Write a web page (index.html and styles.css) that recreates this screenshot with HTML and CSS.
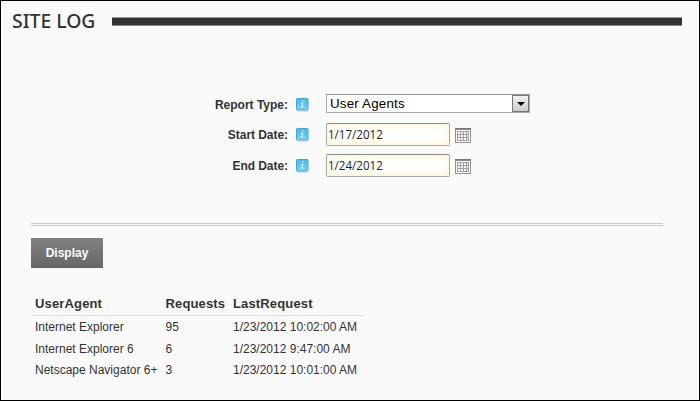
FILE: index.html
```
<!DOCTYPE html>
<html lang="en">
<head>
<meta charset="utf-8">
<title>Site Log</title>
<link rel="stylesheet" href="styles.css">
</head>
<body>
<svg class="defs" width="0" height="0" aria-hidden="true">
  <defs>
    <linearGradient id="blue" x1="0" y1="0" x2="0" y2="1"><stop offset="0" stop-color="#4fb8e6"/><stop offset=".55" stop-color="#62c5f0"/><stop offset="1" stop-color="#86d8f7"/></linearGradient>
    <symbol id="info" viewBox="0 0 13 14">
      <path d="M1 13h11" stroke="#ccc"/>
      <rect x=".5" y=".5" width="11.5" height="11.5" rx=".8" fill="url(#blue)" stroke="#3ba5d4"/>
      <path d="M6.3 2.8h1.6M5 5h1.9L5.9 8.9M4.6 9h2.4" stroke="#def4fd" stroke-width="1" fill="none"/>
    </symbol>
    <symbol id="calendar" viewBox="0 0 16 15">
      <rect x=".5" y=".5" width="15" height="14" fill="#fff" stroke="#929292"/>
      <path d="M0 .5h16" stroke="#777"/><path d="M0 1.5h16" stroke="#8c8c8c"/>
      <path d="M2 3h12v10H2z" fill="#a0a0a0"/>
      <path d="M3 4h2v2H3zM6 4h2v2H6zM9 4h2v2H9zM12 4h1v2h-1zM3 7h2v2H3zM6 7h2v2H6zM9 7h2v2H9zM12 7h1v2h-1zM3 10h2v2H3zM6 10h2v2H6zM9 10h2v2H9zM12 10h1v2h-1z" fill="#fff"/>
    </symbol>
  </defs>
</svg>
<main class="panel">
  <header class="heading"><h1>SITE LOG</h1><span class="bar"></span></header>
  <form class="form">
    <div class="row row-type"><label>Report Type:</label><svg class="info"><use href="#info"/></svg>
      <div class="select"><span>User Agents</span><i class="drop"></i></div></div>
    <div class="row"><label>Start Date:</label><svg class="info"><use href="#info"/></svg>
      <div class="date"><span>1/17/2012</span></div><svg class="calendar"><use href="#calendar"/></svg></div>
    <div class="row"><label>End Date:</label><svg class="info"><use href="#info"/></svg>
      <div class="date"><span>1/24/2012</span></div><svg class="calendar"><use href="#calendar"/></svg></div>
  </form>
  <div class="rule"></div>
  <button class="display" type="button">Display</button>
  <table class="log">
    <colgroup><col class="c1"><col class="c2"><col class="c3"></colgroup>
    <thead><tr><th>UserAgent</th><th>Requests</th><th>LastRequest</th></tr></thead>
    <tbody>
      <tr><td>Internet Explorer</td><td>95</td><td>1/23/2012 10:02:00 AM</td></tr>
      <tr class="second"><td>Internet Explorer 6</td><td>6</td><td>1/23/2012 9:47:00 AM</td></tr>
      <tr><td>Netscape Navigator 6+</td><td>3</td><td>1/23/2012 10:01:00 AM</td></tr>
    </tbody>
  </table>
</main>
</body>
</html>
```
FILE: styles.css
```
* { box-sizing: border-box; }
body { margin: 0; font: 12px "Liberation Sans", Arial, sans-serif; color: #333; }
.defs { display: block; height: 0; }
.panel { width: 700px; height: 401px; border: 1px solid #000; background: #fafafa; overflow: hidden; }
.heading { display: flex; height: 40px; padding-left: 11px; }
h1 { margin: 0; width: 100px; font: 500 20.5px/38px "Noto Sans", sans-serif; white-space: nowrap; transform: scaleX(.945); transform-origin: 0 0; }
.bar { width: 570px; height: 9px; margin-top: 16px; background: #333; border-top: 1px solid #999; border-bottom: 1px solid #888; }
.form { padding-top: 52px; }
.row { display: flex; align-items: flex-start; height: 31px; }
.row-type { height: 29px; }
.row label { width: 287px; text-align: right; font-weight: bold; line-height: 27px; letter-spacing: -.05px; }
.row-type label { line-height: 25px; letter-spacing: 0; }
.info { width: 13px; height: 14px; margin: 6px 17px 0 8px; }
.row-type .info { margin-top: 5px; }
.select { display: flex; justify-content: space-between; width: 204px; height: 19px; margin-top: 1px; border: 1px solid #aaa; border-top-color: #999; background: #fff; color: #000; font-size: 13.33px; line-height: 17px; padding-left: 3px; letter-spacing: .2px; }
.drop { width: 17px; height: 17px; border: 1px solid #777; background: linear-gradient(#f2f2f2, #ccc); display: flex; align-items: center; justify-content: center; }
.drop::after { content: ""; border: 4px solid transparent; border-top-color: #000; border-bottom: 0; }
.date { width: 124px; height: 23px; margin-top: 1px; border: 1px solid #aaa; border-top-color: #888; border-radius: 2px; background: #fff; box-shadow: inset 0 0 8px #fff0b8; color: #222; padding-left: 1px; font: 13px/20px "Open Sans", sans-serif; }
.date span { display: block; width: 60px; transform: scaleX(.89); transform-origin: 0 0; }
.calendar { width: 16px; height: 15px; margin: 6px 0 0 5px; }
.rule { width: 632px; height: 3px; margin: 39px 0 0 30px; border-top: 1px solid #c8c8c8; border-bottom: 1px solid #c8c8c8; }
.display { display: block; width: 72px; height: 30px; margin: 12px 0 0 30px; padding: 0; border: 0; background: linear-gradient(#818181, #666); color: #fff; font: bold 12px "Liberation Sans", Arial, sans-serif; }
.log { width: 332px; margin: 24px 0 0 30px; border-collapse: separate; border-spacing: 0; table-layout: fixed; }
.c1 { width: 130.5px; }
.c2 { width: 67.5px; }
th, td { padding: 0 0 0 4px; text-align: left; white-space: nowrap; }
th { height: 24px; padding-bottom: 1px; font-size: 13px; letter-spacing: .15px; border-bottom: 1px solid #d9d9d9; }
td { height: 21px; padding-top: 1px; }
.second td { height: 22px; }
```
